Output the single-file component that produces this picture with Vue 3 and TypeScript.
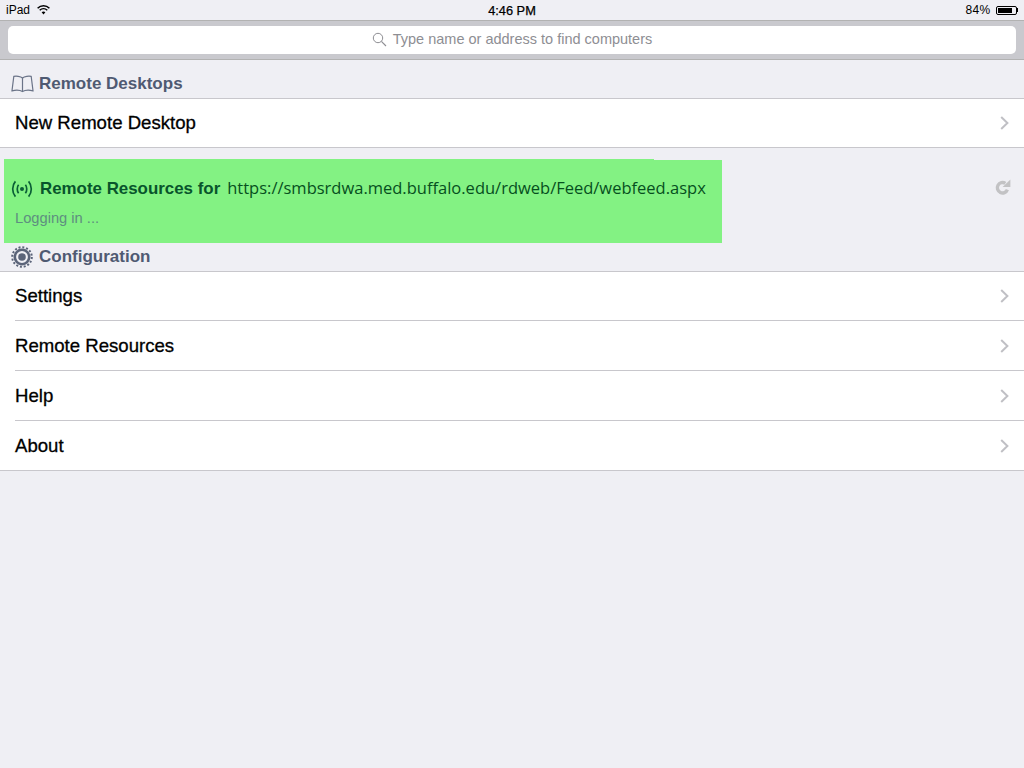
<script setup lang="ts">
const configRows: string[] = ['Settings', 'Remote Resources', 'Help', 'About']
</script>

<template>
  <div class="screen">
    <div class="status">
      <div class="status-left">
        <span>iPad</span>
        <svg class="wifi" width="13" height="10" viewBox="0 0 13 10">
          <path d="M0.6 3.2C3.9 0 9.1 0 12.4 3.2" fill="none" stroke="#000" stroke-width="1.5" />
          <path d="M2.7 5.3C4.9 3.3 8.1 3.3 10.3 5.3" fill="none" stroke="#000" stroke-width="1.5" />
          <path d="M4.6 7.2L6.5 9.6L8.4 7.2C7.3 6.1 5.7 6.1 4.6 7.2Z" fill="#000" />
        </svg>
      </div>
      <div class="status-time">4:46 PM</div>
      <div class="status-right">
        <span>84%</span>
        <div class="battery"><div class="battery-fill"></div></div>
        <div class="battery-tip"></div>
      </div>
    </div>

    <div class="searchbar">
      <div class="search-input">
        <svg width="15" height="15" viewBox="0 0 15 15">
          <circle cx="6" cy="6" r="4.7" fill="none" stroke="#8e8e93" stroke-width="1" />
          <path d="M9.4 9.4L14 14" stroke="#8e8e93" stroke-width="1.1" />
        </svg>
        <span>Type name or address to find computers</span>
      </div>
    </div>

    <div class="section-head first">
      <svg width="23" height="18" viewBox="0 0 23 18">
        <path d="M11.5 3C9.5 1.2 5 0.9 2.8 1.4L1 15.8C4.5 15 9 15 11.5 16.6C14 15 18.5 15 22 15.8L20.2 1.4C18 0.9 13.5 1.2 11.5 3Z" fill="none" stroke="#6b7488" stroke-width="1.2" />
        <path d="M11.5 3V16.6" fill="none" stroke="#6b7488" stroke-width="1.2" />
      </svg>
      <span>Remote Desktops</span>
    </div>

    <div class="list">
      <div class="row single">
        <span>New Remote Desktop</span>
        <svg class="chev" width="9" height="14" viewBox="0 0 9 14">
          <path d="M1.2 1L7.4 7L1.2 13" fill="none" stroke="#c0c0c5" stroke-width="2" />
        </svg>
      </div>
    </div>

    <div class="resources">
      <div class="highlight">
        <div class="res-title">
          <svg width="22" height="18" viewBox="0 0 22 18">
            <circle cx="11" cy="9" r="2" fill="#0a5f36" />
            <path d="M7.6 4.8C5.8 7 5.8 11 7.6 13.2M14.4 4.8C16.2 7 16.2 11 14.4 13.2" fill="none" stroke="#0a5f36" stroke-width="1.7" />
            <path d="M4.4 1.4C0.8 5.6 0.8 12.4 4.4 16.6M17.6 1.4C21.2 5.6 21.2 12.4 17.6 16.6" fill="none" stroke="#0a5f36" stroke-width="1.7" />
          </svg>
          <span class="res-label">Remote Resources for</span>
          <span class="res-url">https://smbsrdwa.med.buffalo.edu/rdweb/Feed/webfeed.aspx</span>
        </div>
        <div class="res-status">Logging in ...</div>
      </div>
      <svg class="reload" width="17" height="17" viewBox="0 0 17 17">
        <path d="M13.4 10.6A5.2 5.2 0 1 1 11.4 4.4" fill="none" stroke="#c2c2c4" stroke-width="3.4" />
        <path d="M8.6 8H16.4V0.6Z" fill="#c2c2c4" />
      </svg>
    </div>

    <div class="section-head config">
      <svg width="22" height="22" viewBox="0 0 22 22">
        <circle cx="11" cy="11" r="9.8" fill="none" stroke="#5b6479" stroke-width="2" stroke-dasharray="2 1.85" />
        <circle cx="11" cy="11" r="7.2" fill="none" stroke="#5b6479" stroke-width="2.6" />
        <circle cx="11" cy="11" r="3.8" fill="#5b6479" />
      </svg>
      <span>Configuration</span>
    </div>

    <div class="list">
      <div v-for="(label, i) in configRows" :key="label" class="row" :class="{ divided: i < configRows.length - 1 }">
        <span>{{ label }}</span>
        <svg class="chev" width="9" height="14" viewBox="0 0 9 14">
          <path d="M1.2 1L7.4 7L1.2 13" fill="none" stroke="#c0c0c5" stroke-width="2" />
        </svg>
      </div>
    </div>
  </div>
</template>

<style>
html, body { margin: 0; background: #efeff4; }
</style>

<style scoped>
.screen {
  width: 1024px;
  height: 768px;
  overflow: hidden;
  background: #efeff4;
  font-family: "Liberation Sans", Arial, sans-serif;
  color: #000;
}
.status {
  height: 20px;
  display: grid;
  grid-template-columns: 1fr auto 1fr;
  align-items: center;
  padding: 0 6px;
  box-sizing: border-box;
  font-size: 12px;
}
.status-left { display: flex; align-items: center; gap: 7px; }
.wifi { margin-top: -1px; }
.status-time { font-size: 12.8px; -webkit-text-stroke: 0.25px #000; }
.status-right { display: flex; justify-content: flex-end; align-items: center; }
.status-right span { margin-right: 5px; letter-spacing: 0.3px; }
.battery {
  border: 1px solid #000;
  border-radius: 2px;
  padding: 1px;
  width: 17px;
  height: 5px;
}
.battery-fill { width: 84%; height: 100%; background: #000; }
.battery-tip { width: 1.5px; height: 4px; background: #000; }
.searchbar {
  height: 40px;
  box-sizing: border-box;
  background: #c9c9ce;
  border-top: 1px solid #b2b2b2;
  border-bottom: 1px solid #b2b2b2;
  padding: 5px 8px;
}
.search-input {
  height: 28px;
  box-sizing: border-box;
  padding-bottom: 2px;
  background: #fff;
  border-radius: 5px;
  display: flex;
  align-items: center;
  justify-content: center;
  gap: 6px;
  color: #8e8e93;
  font-size: 14.5px;
}
.section-head {
  display: flex;
  align-items: center;
  font-size: 17px;
  font-weight: 700;
  color: #4f5a72;
  padding-left: 11px;
  gap: 5px;
  box-sizing: border-box;
}
.section-head.first { height: 38px; padding-top: 10px; }
.section-head.config { height: 28px; gap: 6px; }
.list {
  background: #fff;
  border-top: 1px solid #c8c7cc;
  border-bottom: 1px solid #c8c7cc;
}
.row {
  height: 49px;
  margin-left: 15px;
  padding-right: 15px;
  display: flex;
  align-items: center;
  justify-content: space-between;
  font-size: 18.6px;
  -webkit-text-stroke: 0.3px #000;
  box-sizing: border-box;
}
.row.single { height: 48px; }
.row.divided {
  height: 50px;
  border-bottom: 1px solid #c8c7cc;
}
.row.divided:first-child { height: 49px; }
.resources {
  height: 95px;
  box-sizing: border-box;
  padding: 12px 13px 0 4px;
  display: flex;
  justify-content: space-between;
  align-items: flex-start;
}
.highlight {
  position: relative;
  width: 718px;
  height: 83px;
  background: #83f283;
  box-sizing: border-box;
  padding: 20px 0 0 7px;
}
.highlight::before {
  content: "";
  position: absolute;
  left: 0;
  top: -1px;
  width: 650px;
  height: 1px;
  background: #83f283;
}
.res-title { display: flex; align-items: center; height: 18px; gap: 7px; }
.res-label { font-size: 16.9px; font-weight: 700; color: #08552c; }
.res-url {
  font-size: 16.5px;
  color: #064f1e;
  font-family: "Open Sans", "Liberation Sans", sans-serif;
  margin-bottom: 4px;
}
.res-status {
  margin: 12px 0 0 4px;
  font-size: 14.7px;
  color: #5e8f80;
}
.reload { margin-top: 19px; }
</style>
